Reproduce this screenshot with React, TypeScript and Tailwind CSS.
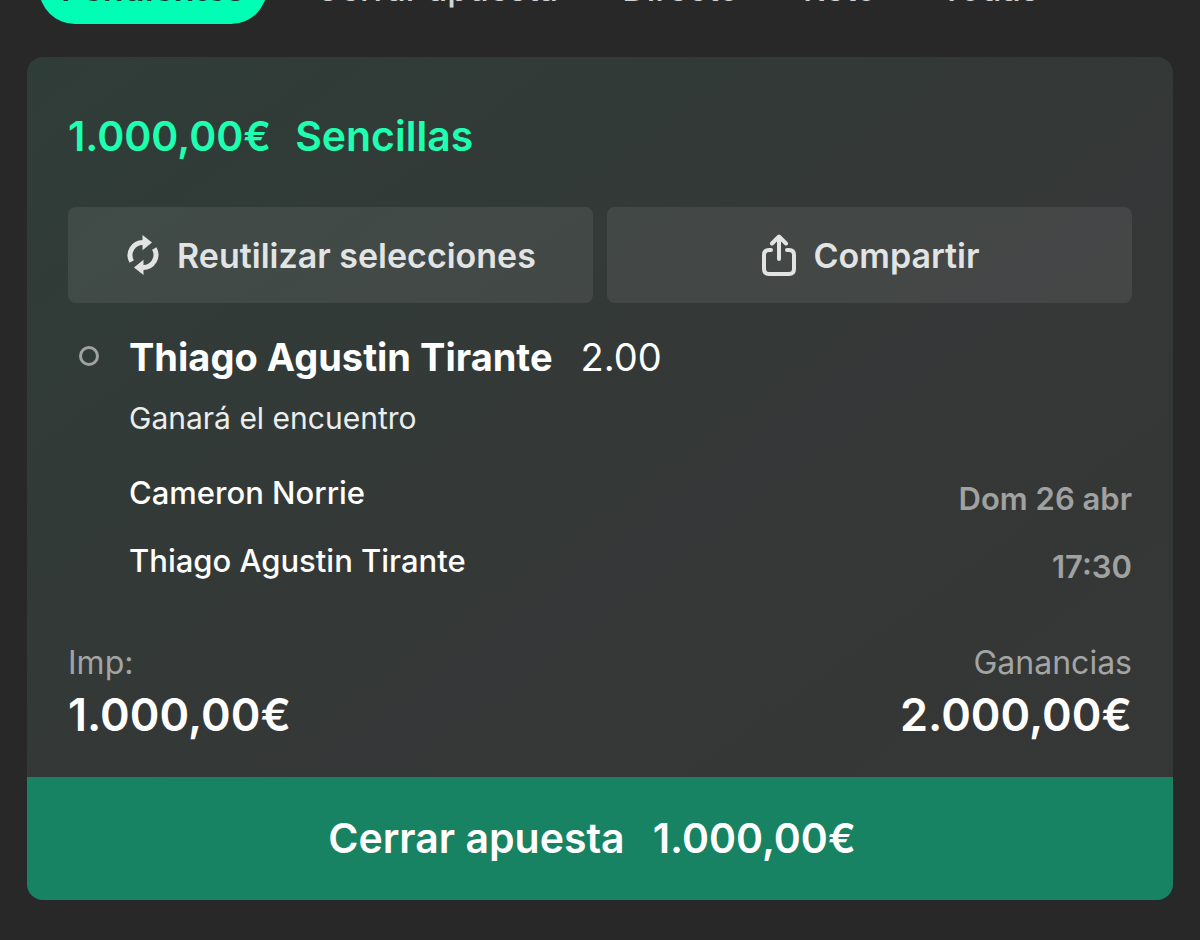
const TABS = ["Cerrar apuesta", "Directo", "Reto", "Todas"];

const ReuseIcon = () => (
  <svg width="32" height="40" viewBox="0 0 32 40" fill="none" aria-hidden="true">
    <path d="M4.700 26.500A12.800 12.800 0 0 1 16 7.400" stroke="currentColor" strokeWidth="5" />
    <path d="M15.500 0L25 7.600L15.500 15.200Z" fill="currentColor" />
    <path d="M27.300 13.500A12.800 12.800 0 0 1 16 32.600" stroke="currentColor" strokeWidth="5" />
    <path d="M16.500 40L7 32.400L16.500 24.800Z" fill="currentColor" />
  </svg>
);

const ShareIcon = () => (
  <svg
    width="34"
    height="42"
    viewBox="0 0 34 42"
    fill="none"
    stroke="currentColor"
    strokeWidth="4"
    strokeLinecap="round"
    strokeLinejoin="round"
    aria-hidden="true"
  >
    <path d="M9 16H7Q2 16 2 21V35Q2 40 7 40H27Q32 40 32 35V21Q32 16 27 16H25" />
    <path d="M17 25V3M10 9.500L17 2.500L24 9.500" />
  </svg>
);

interface ActionButtonProps {
  icon: React.ReactNode;
  label: string;
}

const ActionButton = ({ icon, label }: ActionButtonProps) => (
  <button
    type="button"
    className="flex h-24 flex-1 items-center justify-center gap-[18px] rounded-lg bg-white/8 pb-px pl-[2px] text-[34px] font-semibold text-[#e2e4e3]"
  >
    {icon}
    <span className="pt-[2px]">{label}</span>
  </button>
);

interface ParticipantRowProps {
  name: string;
  detail: string;
}

const ParticipantRow = ({ name, detail }: ParticipantRowProps) => (
  <div className="flex h-[68px] justify-between text-[31px]">
    <span className="font-medium text-white">{name}</span>
    <span className="pt-[6px] font-semibold text-[#a0a2a1]">{detail}</span>
  </div>
);

const App = () => {
  return (
    <div className="min-h-screen overflow-x-hidden bg-[#282828] font-['Inter','Liberation_Sans',sans-serif]">
      <nav className="flex h-6 items-end gap-16 overflow-hidden pl-[39px] text-[34px] font-medium text-[#d4d4d4]">
        <button
          type="button"
          className="-mr-4 h-[72px] w-[228px] shrink-0 rounded-full bg-[#00ffb4] font-semibold text-[#1f3b31]"
        >
          Pendientes
        </button>
        {TABS.map((tab) => (
          <button key={tab} type="button" className="h-[72px] shrink-0">
            {tab}
          </button>
        ))}
      </nav>

      <main className="px-[27px] pt-[33px] pb-10">
        <article className="overflow-hidden rounded-2xl bg-linear-to-br from-[#2f3d38] via-[#343837] to-[#363636]">
          <div className="px-[41px] pt-[52px] pb-[30px]">
            <h1 className="flex gap-6 text-[41px] leading-[54px] font-semibold text-[#1effb0]">
              <span>1.000,00€</span>
              <span>Sencillas</span>
            </h1>

            <div className="mt-11 flex gap-[14px]">
              <ActionButton icon={<ReuseIcon />} label="Reutilizar selecciones" />
              <ActionButton icon={<ShareIcon />} label="Compartir" />
            </div>

            <section className="flex pt-[29px]">
              <div className="w-[61px] shrink-0 pt-[14px] pl-[11px]">
                <div className="size-5 rounded-full border-3 border-[#a0a3a1]" />
              </div>
              <div className="flex-1 leading-10">
                <h2 className="flex gap-7 text-[38px] leading-[50px] font-bold text-white">
                  <span>Thiago Agustin Tirante</span>
                  <span className="font-normal">2.00</span>
                </h2>
                <p className="mt-4 mb-[35px] text-[30px] text-[#eceeed]">Ganará el encuentro</p>
                <ParticipantRow name="Cameron Norrie" detail="Dom 26 abr" />
                <ParticipantRow name="Thiago Agustin Tirante" detail="17:30" />
              </div>
            </section>

            <dl className="mt-[34px] flex justify-between">
              <div>
                <dt className="text-[32px] leading-10 text-[#a3a5a4]">Imp:</dt>
                <dd className="text-[45px] leading-[64px] font-semibold text-white">1.000,00€</dd>
              </div>
              <div className="text-right">
                <dt className="text-[32px] leading-10 text-[#a3a5a4]">Ganancias</dt>
                <dd className="text-[45px] leading-[64px] font-semibold text-white">2.000,00€</dd>
              </div>
            </dl>
          </div>

          <button
            type="button"
            className="flex h-[123px] w-full items-center justify-center gap-7 bg-[#178362] pr-4 text-[41px] font-semibold text-white"
          >
            <span>Cerrar apuesta</span>
            <span>1.000,00€</span>
          </button>
        </article>
      </main>
    </div>
  );
};

export default App;
